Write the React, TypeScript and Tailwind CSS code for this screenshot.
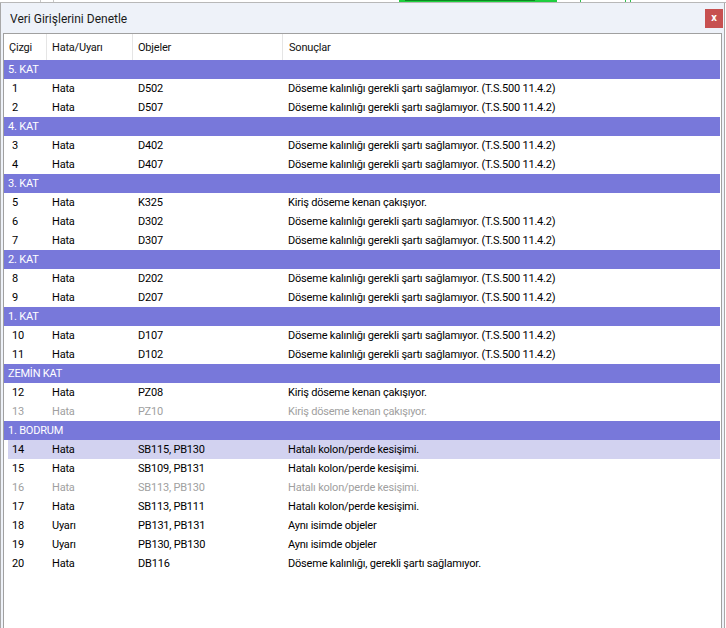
import React from "react";

type Row =
  | { kind: "group"; label: string }
  | { kind: "data"; n: string; t: string; o: string; r: string; dim?: boolean; sel?: boolean };

const A = "Döseme kalınlığı gerekli şartı sağlamıyor. (T.S.500 11.4.2)";
const K = "Kiriş döseme kenan çakışıyor.";
const H = "Hatalı kolon/perde kesişimi.";
const S = "Aynı isimde objeler";

const rows: Row[] = [
  { kind: "group", label: "5. KAT" },
  { kind: "data", n: "1", t: "Hata", o: "D502", r: A },
  { kind: "data", n: "2", t: "Hata", o: "D507", r: A },
  { kind: "group", label: "4. KAT" },
  { kind: "data", n: "3", t: "Hata", o: "D402", r: A },
  { kind: "data", n: "4", t: "Hata", o: "D407", r: A },
  { kind: "group", label: "3. KAT" },
  { kind: "data", n: "5", t: "Hata", o: "K325", r: K },
  { kind: "data", n: "6", t: "Hata", o: "D302", r: A },
  { kind: "data", n: "7", t: "Hata", o: "D307", r: A },
  { kind: "group", label: "2. KAT" },
  { kind: "data", n: "8", t: "Hata", o: "D202", r: A },
  { kind: "data", n: "9", t: "Hata", o: "D207", r: A },
  { kind: "group", label: "1. KAT" },
  { kind: "data", n: "10", t: "Hata", o: "D107", r: A },
  { kind: "data", n: "11", t: "Hata", o: "D102", r: A },
  { kind: "group", label: "ZEMİN KAT" },
  { kind: "data", n: "12", t: "Hata", o: "PZ08", r: K },
  { kind: "data", n: "13", t: "Hata", o: "PZ10", r: K, dim: true },
  { kind: "group", label: "1. BODRUM" },
  { kind: "data", n: "14", t: "Hata", o: "SB115, PB130", r: H, sel: true },
  { kind: "data", n: "15", t: "Hata", o: "SB109, PB131", r: H },
  { kind: "data", n: "16", t: "Hata", o: "SB113, PB130", r: H, dim: true },
  { kind: "data", n: "17", t: "Hata", o: "SB113, PB111", r: H },
  { kind: "data", n: "18", t: "Uyarı", o: "PB131, PB131", r: S },
  { kind: "data", n: "19", t: "Uyarı", o: "PB130, PB130", r: S },
  { kind: "data", n: "20", t: "Hata", o: "DB116", r: "Döseme kalınlığı, gerekli şartı sağlamıyor." },
];

export default function App() {
  return (
    <div
      className="w-[726px] h-[628px] bg-white flex flex-col overflow-hidden text-[11px] tracking-[-0.2px] text-black"
      style={{ fontFamily: "Roboto, 'Noto Sans', sans-serif" }}
    >
      {/* background strip behind window */}
      <div className="relative h-[3px] bg-white border-b border-[#b8b8b8] shrink-0">
        <div className="absolute left-[40px] top-0 w-px h-[2px] bg-[#c8c8c8]" />
        <div className="absolute left-[53px] top-0 w-px h-[2px] bg-[#c8c8c8]" />
        <div className="absolute left-[399px] top-0 w-[158px] h-[2px] bg-[#1fcf3f]" />
        <div className="absolute left-[405px] top-0 w-[130px] h-px bg-[#0a8a22]" />
        <div className="absolute left-[580px] top-0 w-px h-[2px] bg-[#2fbf4f]" />
        <div className="absolute left-[625px] top-0 w-px h-[2px] bg-[#2fbf4f]" />
        <div className="absolute left-[630px] top-0 w-px h-[2px] bg-[#2fbf4f]" />
      </div>
      <div className="flex-1 flex min-h-0">
        <div className="w-[725px] flex flex-col bg-[#eef2f9] border-l border-r border-[#a8a8a8] min-h-0">
          {/* title bar */}
          <div className="h-[30px] shrink-0 flex items-center justify-between pl-[9px] pr-[1px]">
            <span className="text-[12px] tracking-normal text-[#1a1a1a] pt-[2px]">Veri Girişlerini Denetle</span>
            <div className="w-[18px] h-[19px] bg-[#c75050] flex items-center justify-center text-white text-[11px] font-bold leading-none pb-[2px]">
              x
            </div>
          </div>
          {/* list */}
          <div className="flex-1 mx-[2px] bg-white border-t border-l border-r border-[#a0a0a0] flex flex-col min-h-0">
            {/* header */}
            <div className="h-[26px] grid grid-cols-[43px_86px_150px_1fr] text-[#111]">
              <div className="flex items-center pl-[5px] pt-[2px] border-r border-[#e5e5e5]">Çizgi</div>
              <div className="flex items-center pl-[5px] pt-[2px] border-r border-[#e5e5e5]">Hata/Uyarı</div>
              <div className="flex items-center pl-[5px] pt-[2px] border-r border-[#e5e5e5]">Objeler</div>
              <div className="flex items-center pl-[6px] pt-[2px]">Sonuçlar</div>
            </div>
            <div className="flex flex-col pr-px">
              {rows.map((row, i) =>
                row.kind === "group" ? (
                  <div key={i} className="h-[19px] bg-[#7878da] text-white flex items-center pl-[4px] pt-[2px]">
                    {row.label}
                  </div>
                ) : (
                  <div key={i} className="h-[19px] pl-[4px]">
                    <div
                      className={
                        "h-full grid grid-cols-[39px_86px_150px_1fr] items-center pt-[2px] " +
                        (row.sel ? "bg-[#d2d2f0] " : "") +
                        (row.dim ? "text-[#a0a0a0]" : "text-black")
                      }
                    >
                      <div className="pl-[4px]">{row.n}</div>
                      <div className="pl-[5px]">{row.t}</div>
                      <div className="pl-[5px]">{row.o}</div>
                      <div className="pl-[5px] whitespace-nowrap">{row.r}</div>
                    </div>
                  </div>
                )
              )}
            </div>
          </div>
        </div>
      </div>
    </div>
  );
}
